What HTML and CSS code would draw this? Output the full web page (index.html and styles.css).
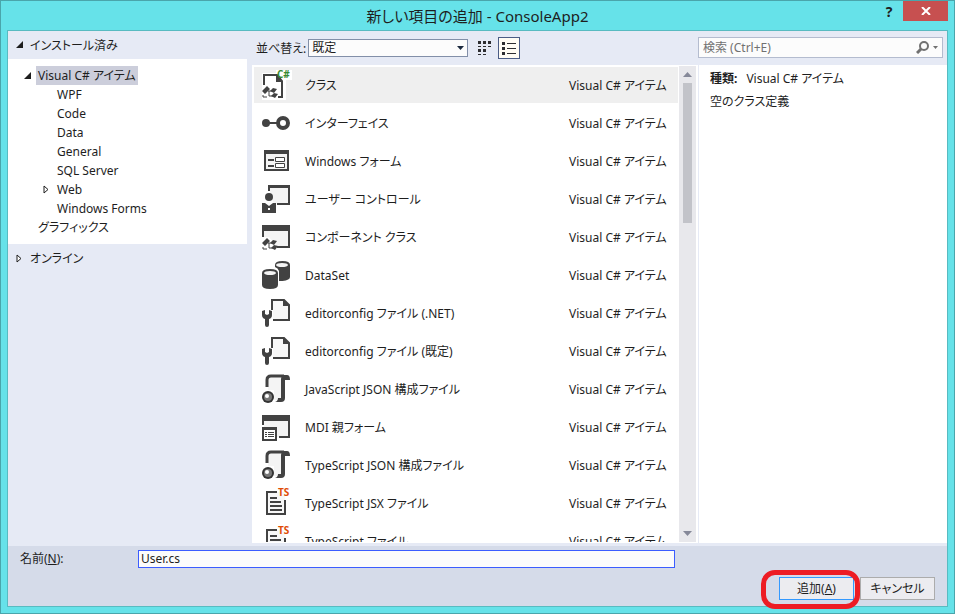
FILE: index.html
```
<!DOCTYPE html>
<html lang="ja">
<head>
  <meta charset="UTF-8" />
  <meta name="viewport" content="width=device-width, initial-scale=1.0"/>
  <title>新しい項目の追加 - ConsoleApp2</title>
  <link rel="stylesheet" href="styles.css">
</head>
<body>

<!-- Shared icons -->
<svg class="sprite" aria-hidden="true">
  <symbol id="parts" viewBox="0 0 16 12">
    <path d="M0 5 5 0 8 3 3 8z M8 5l3-3 4 1-3 4z M9 10l3-3 4 1-3 4z" fill="#424242"/>
    <path d="M6 5h4 M7 5v5h4 M1 9v2h4" fill="none" stroke="#424242"/>
  </symbol>
  <symbol id="editorconfig" viewBox="0 0 32 32">
    <path d="M13 3h11l5 5v15H13z" fill="#f7f7f7"/>
    <path d="M12 13V3h12l5 5v15H13" fill="none" stroke="#424242" stroke-width="2"/>
    <path d="M23 2v7h7z" fill="#424242"/>
    <path d="M2 14l3-1v4l2 1 2-1v-4l3 1v4q0 3-3 4v6q0 2-2 2t-2-2v-6q-3-1-3-4z" fill="#424242"/>
  </symbol>
  <symbol id="json" viewBox="0 0 32 32">
    <path d="M8 4h15v23H14V17H8z" fill="#f4f4f4"/>
    <path d="M7 14V7q0-4 4-4h13" fill="none" stroke="#424242" stroke-width="3"/>
    <path d="M23 2h4q3 0 3 5h-5v18q0 4-4 4h-6q3-1 3-4h3V6q0-3 2-4z" fill="#424242"/>
    <circle cx="8" cy="24" r="6" fill="#333"/>
    <circle cx="8" cy="24" r="4" fill="#777"/>
    <circle cx="7" cy="23" r="2" fill="#fff"/>
  </symbol>
  <symbol id="typescript" viewBox="0 0 32 32">
    <path d="M7 5h18v22H7z" fill="#f7f7f7"/>
    <path d="M17 5H7v22h18V13" fill="none" stroke="#424242" stroke-width="2"/>
    <path d="M10 11h7 M10 15h11 M10 19h12 M10 23h12" stroke="#424242" stroke-width="2"/>
  </symbol>
</svg>

<div class="window">
  <header class="titlebar">
    <h1>新しい項目の追加 - ConsoleApp2</h1>
    <div class="window-buttons">
      <button type="button" class="help" aria-label="ヘルプ">?</button>
      <button type="button" class="close" aria-label="閉じる">
        <svg width="10" height="8" viewBox="0 0 10 8"><path d="M1 0 9 8 M9 0 1 8" stroke="#fff" stroke-width="2"/></svg>
      </button>
    </div>
  </header>

  <main class="dialog">
    <div class="panes">

      <!-- Category tree -->
      <nav class="sidebar">
        <button type="button" class="section"><svg width="8" height="8"><path d="M8 0v7H1z" fill="#1e1e1e"/></svg>インストール済み</button>
        <ul class="tree">
          <li class="level1"><svg class="twisty" width="8" height="8"><path d="M8 0v7H1z" fill="#1e1e1e"/></svg><a href="#" class="current">Visual C# アイテム</a></li>
          <li><a href="#">WPF</a></li>
          <li><a href="#">Code</a></li>
          <li><a href="#">Data</a></li>
          <li><a href="#">General</a></li>
          <li><a href="#">SQL Server</a></li>
          <li><svg class="twisty" width="8" height="9"><path d="M2 1v7l4-3.500z" fill="#fff" stroke="#1e1e1e"/></svg><a href="#">Web</a></li>
          <li><a href="#">Windows Forms</a></li>
          <li class="level1"><a href="#">グラフィックス</a></li>
        </ul>
        <button type="button" class="section"><svg width="8" height="9"><path d="M2 1v7l4-3.500z" fill="#fff" stroke="#1e1e1e"/></svg>オンライン</button>
      </nav>

      <!-- Templates -->
      <section class="templates">
        <div class="toolbar">
          <label for="sort">並べ替え:</label>
          <div class="combo">
            <select id="sort"><option>既定</option></select>
            <svg width="7" height="4"><path d="M0 0h7L3.500 4z" fill="#1b293e"/></svg>
          </div>
          <button type="button" class="view" aria-label="小さいアイコン">
            <svg width="14" height="14"><path d="M0 0h3v3H0z M5 0h3v3H5z M10 0h3v3h-3z M0 8h3v3H0z M5 8h3v3H5z M0 5h3v1H0z M5 5h3v1H5z M10 5h3v1h-3z M0 13h3v1H0z M5 13h3v1H5z" fill="#2d2d30"/></svg>
          </button>
          <button type="button" class="view active" aria-label="一覧">
            <svg width="14" height="13"><path d="M0 0h3v3H0z M0 5h3v3H0z M0 10h3v3H0z M5 1h9v1H5z M5 6h9v1H5z M5 11h9v1H5z" fill="#2d2d30"/></svg>
          </button>
        </div>

        <div class="list-box">
          <ul class="list">
            <li class="selected">
              <svg class="icon" viewBox="0 0 32 32">
                <path d="M2 4h14V1h16v10h-6v20H2z" fill="#fff"/>
                <path d="M4 16V6h13l5 6v16h-4" fill="none" stroke="#424242" stroke-width="2"/>
                <path d="M16 5v8h7z" fill="#424242"/>
                <use href="#parts" x="2" y="17" width="16" height="12"/>
                <text x="17" y="9" class="badge badge-cs">C#</text>
              </svg>
              <span>クラス</span><span class="kind">Visual C# アイテム</span>
            </li>
            <li>
              <svg class="icon" viewBox="0 0 32 32">
                <circle cx="6" cy="16" r="4" fill="#424242"/>
                <path d="M9 16h9" stroke="#424242" stroke-width="2"/>
                <circle cx="23" cy="16" r="5" fill="#fff" stroke="#424242" stroke-width="4"/>
              </svg>
              <span>インターフェイス</span><span class="kind">Visual C# アイテム</span>
            </li>
            <li>
              <svg class="icon" viewBox="0 0 32 32">
                <path d="M5 6h23v19H5z" fill="#f4f4f4" stroke="#424242" stroke-width="2"/>
                <path d="M4 5h25v4H4z M8 14h6v2H8z M8 20h6v2H8z" fill="#424242"/>
                <path d="M15.500 12.500h9v4h-9z M15.500 18.500h9v4h-9z" fill="#fff" stroke="#424242"/>
              </svg>
              <span>Windows フォーム</span><span class="kind">Visual C# アイテム</span>
            </li>
            <li>
              <svg class="icon" viewBox="0 0 32 32">
                <path d="M10 4h19v17H14l-4-9z" fill="#f4f4f4"/>
                <path d="M8 8V2h22v20H17v-2h11V5H10v3z" fill="#424242"/>
                <circle cx="9" cy="14" r="4" fill="#424242"/>
                <path d="M2 20h3l4 3 4-3h3v10H2z" fill="#424242"/>
                <path d="M8 25h2v2H8z" fill="#fff"/>
              </svg>
              <span>ユーザー コントロール</span><span class="kind">Visual C# アイテム</span>
            </li>
            <li>
              <svg class="icon" viewBox="0 0 32 32">
                <path d="M4 9h25v17H17L9 16H4z" fill="#f4f4f4"/>
                <path d="M2 4h28v23H17v-2h11V10H4v6H2z" fill="#424242"/>
                <use href="#parts" x="2" y="17" width="16" height="12"/>
              </svg>
              <span>コンポーネント クラス</span><span class="kind">Visual C# アイテム</span>
            </li>
            <li>
              <svg class="icon" viewBox="0 0 32 32">
                <path d="M15 6q0-4 7.500-4T30 6v12q0 3-7.500 4h-3.500V12q-1-3-4-4z" fill="#424242"/>
                <ellipse cx="22" cy="6" rx="6" ry="2" fill="#f4f4f4"/>
                <path d="M2 14q0-4 8-4t8 4v12q0 4-8 4t-8-4z" fill="#424242"/>
                <ellipse cx="10" cy="14" rx="6" ry="2" fill="#f4f4f4"/>
              </svg>
              <span>DataSet</span><span class="kind">Visual C# アイテム</span>
            </li>
            <li>
              <svg class="icon"><use href="#editorconfig"/></svg>
              <span>editorconfig ファイル (.NET)</span><span class="kind">Visual C# アイテム</span>
            </li>
            <li>
              <svg class="icon"><use href="#editorconfig"/></svg>
              <span>editorconfig ファイル (既定)</span><span class="kind">Visual C# アイテム</span>
            </li>
            <li>
              <svg class="icon"><use href="#json"/></svg>
              <span>JavaScript JSON 構成ファイル</span><span class="kind">Visual C# アイテム</span>
            </li>
            <li>
              <svg class="icon" viewBox="0 0 32 32">
                <path d="M4 9h25v17H4z" fill="#f4f4f4"/>
                <path d="M2 4h28v23H19v-2h9V10H4v4H2z" fill="#424242"/>
                <path d="M3 17h13v12H3z" fill="#fff" stroke="#424242" stroke-width="2"/>
                <path d="M2 16h15v3H2z M5 21h2v1H5z M8 21h6v1H8z M5 23h2v1H5z M8 23h6v1H8z M5 25h2v1H5z M8 25h6v1H8z" fill="#424242"/>
              </svg>
              <span>MDI 親フォーム</span><span class="kind">Visual C# アイテム</span>
            </li>
            <li>
              <svg class="icon"><use href="#json"/></svg>
              <span>TypeScript JSON 構成ファイル</span><span class="kind">Visual C# アイテム</span>
            </li>
            <li>
              <svg class="icon"><use href="#typescript"/><text x="18" y="9" class="badge badge-ts">TS</text></svg>
              <span>TypeScript JSX ファイル</span><span class="kind">Visual C# アイテム</span>
            </li>
            <li>
              <svg class="icon"><use href="#typescript"/><text x="18" y="9" class="badge badge-ts">TS</text></svg>
              <span>TypeScript ファイル</span><span class="kind">Visual C# アイテム</span>
            </li>
          </ul>
          <div class="scrollbar">
            <svg width="9" height="5"><path d="M0 5h9L4.500 0z" fill="#868999"/></svg>
            <div class="track"><div class="thumb"></div></div>
            <svg width="9" height="5"><path d="M0 0h9L4.500 5z" fill="#868999"/></svg>
          </div>
        </div>
      </section>

      <!-- Details -->
      <aside class="details">
        <div class="search">
          <input type="text" placeholder="検索 (Ctrl+E)" aria-label="検索">
          <svg width="13" height="13"><circle cx="8" cy="5" r="4" fill="none" stroke="#717171" stroke-width="2"/><path d="M5 8 1 12" stroke="#717171" stroke-width="3"/></svg>
          <svg width="5" height="3"><path d="M0 0h5L2.500 3z" fill="#717171"/></svg>
        </div>
        <div class="info">
          <p><b>種類:</b>Visual C# アイテム</p>
          <p>空のクラス定義</p>
        </div>
      </aside>
    </div>

    <footer class="footer">
      <div class="name-row">
        <label for="name">名前(<u>N</u>):</label>
        <input type="text" id="name" value="User.cs">
      </div>
      <div class="actions">
        <div class="marked"><button type="button" class="primary">追加(<u>A</u>)</button></div>
        <button type="button">キャンセル</button>
      </div>
    </footer>
  </main>
</div>

</body>
</html>
```
FILE: styles.css
```
* { box-sizing: border-box; }

body {
  margin: 0;
  font-family: "Noto Sans", "Noto Sans CJK JP", sans-serif;
  font-size: 12px;
  line-height: 19px;
  font-feature-settings: "palt";
  color: #1e1e1e;
}

button, input, select {
  font: inherit;
  font-feature-settings: inherit;
  color: inherit;
  margin: 0;
  padding: 0;
  border-radius: 0;
}

ul { list-style: none; margin: 0; padding: 0; }
a { color: inherit; text-decoration: none; }
svg { display: block; flex: none; }
.sprite { position: absolute; width: 0; height: 0; }

/* Window frame */
.window {
  display: flex;
  flex-direction: column;
  height: 100vh;
  padding: 0 6px 6px;
  background: #66e2e9;
  border: 1px solid #4aa5ab;
}

.titlebar {
  position: relative;
  flex: none;
  height: 29px;
}

.titlebar h1 {
  margin: 0;
  padding-top: 1px;
  font-size: 15px;
  font-weight: normal;
  line-height: 29px;
  text-align: center;
}

.window-buttons {
  position: absolute;
  top: 0;
  right: 0;
  display: flex;
}

.window-buttons button { border: 0; height: 20px; }
.help { width: 28px; background: none; font-size: 14px; font-weight: bold; }

.window-buttons .close {
  display: flex;
  align-items: center;
  justify-content: center;
  width: 45px;
  background: #c75050;
}

.dialog {
  display: flex;
  flex-direction: column;
  flex: 1;
  min-height: 0;
  background: #e6eaf5;
  border: 1px solid #58bbc1;
}

.panes {
  display: grid;
  grid-template-columns: 239px 1fr 249px;
  flex: 1;
  min-height: 0;
  padding-bottom: 3px;
}

/* Category tree */
.section {
  display: flex;
  align-items: center;
  gap: 7px;
  width: 100%;
  height: 28px;
  padding-left: 7px;
  border: 0;
  background: none;
}

.tree {
  padding: 7px 0;
  background: #fff;
}

.tree li {
  display: flex;
  align-items: center;
  height: 19px;
  padding-left: 49px;
}

.tree .level1 { padding-left: 30px; }
.tree .twisty { margin: 0 7px 0 -15px; }
.tree .current { margin-left: -2px; padding: 0 2px; background: #cccedb; }

/* Templates */
.templates {
  display: flex;
  flex-direction: column;
  min-width: 0;
  min-height: 0;
  padding-left: 5px;
}

.toolbar {
  display: flex;
  align-items: center;
  flex: none;
  height: 34px;
  padding-left: 4px;
}

.combo { position: relative; width: 160px; margin: 0 6px 0 2px; }
.combo svg { position: absolute; right: 4px; top: 7px; }

.combo select {
  display: block;
  width: 100%;
  height: 18px;
  padding-left: 3px;
  line-height: 16px;
  appearance: none;
  border: 1px solid #828fa8;
  background: #fcfcfc;
}

.view {
  display: flex;
  align-items: center;
  justify-content: center;
  width: 22px;
  height: 22px;
  margin-right: 2px;
  border: 1px solid transparent;
  background: none;
}

.view.active { border-color: #4b5c85; background: #fffcf4; }

.list-box {
  display: flex;
  flex: 1;
  min-height: 0;
  padding: 1px 2px 1px;
  background: #fff;
}

.list { flex: 1; padding-top: 1px; overflow: hidden; }

.list li {
  display: flex;
  align-items: center;
  height: 36px;
  margin-bottom: 2px;
  padding: 0 11px 0 6px;
}

.list .selected { background: #efefef; }
.list .icon { width: 32px; height: 32px; margin-right: 13px; overflow: visible; }
.list .kind { width: 98px; margin-left: auto; white-space: nowrap; }
.badge { font-family: "Open Sans", "Noto Sans", sans-serif; font-size: 10px; font-weight: bold; }
.badge-cs { fill: #388a34; }
.badge-ts { fill: #e04c06; }

.scrollbar {
  display: flex;
  flex-direction: column;
  align-items: center;
  width: 17px;
  margin-left: 1px;
  padding: 6px 0;
  background: #e8e8ec;
}

.track { flex: 1; padding: 6px 0; }
.thumb { width: 9px; height: 140px; background: #c2c3c9; }

/* Details */
.details { display: flex; flex-direction: column; }

.search {
  display: flex;
  align-items: center;
  height: 21px;
  margin: 6px 4px 7px 0;
  padding-right: 4px;
  gap: 4px;
  border: 1px solid #b4bccf;
  background: #fcfcfc;
}

.search input {
  flex: 1;
  min-width: 0;
  height: 19px;
  padding-left: 4px;
  border: 0;
  background: none;
}

.search input::placeholder { color: #717171; opacity: 1; }

.info {
  flex: 1;
  margin-left: 1px;
  padding: 4px 11px;
  background: #fff;
}

.info p { margin: 0 0 4px; }
.info b { margin-right: 9px; }

/* Footer */
.footer {
  flex: none;
  padding: 3px 12px 6px;
  background: #d5dbe9;
}

.name-row { display: flex; align-items: center; }
.name-row label { width: 118px; }

.name-row input {
  flex: 1;
  height: 18px;
  margin-right: 260px;
  padding-left: 2px;
  border: 1px solid #3c5dff;
  background: #fcfcfc;
}

.actions {
  display: flex;
  justify-content: flex-end;
  gap: 6px;
  margin-top: 9px;
}

.actions button {
  display: block;
  width: 75px;
  height: 23px;
  border: 1px solid #acacac;
  background: #ececf0;
}

.actions .primary { border-color: #3399ff; }

/* Red marker around the add button */
.marked { position: relative; }

.marked::after {
  content: "";
  position: absolute;
  inset: -7px -6px -9px -18px;
  border: 5px solid #ed1c24;
  border-radius: 14px;
  pointer-events: none;
}
```
